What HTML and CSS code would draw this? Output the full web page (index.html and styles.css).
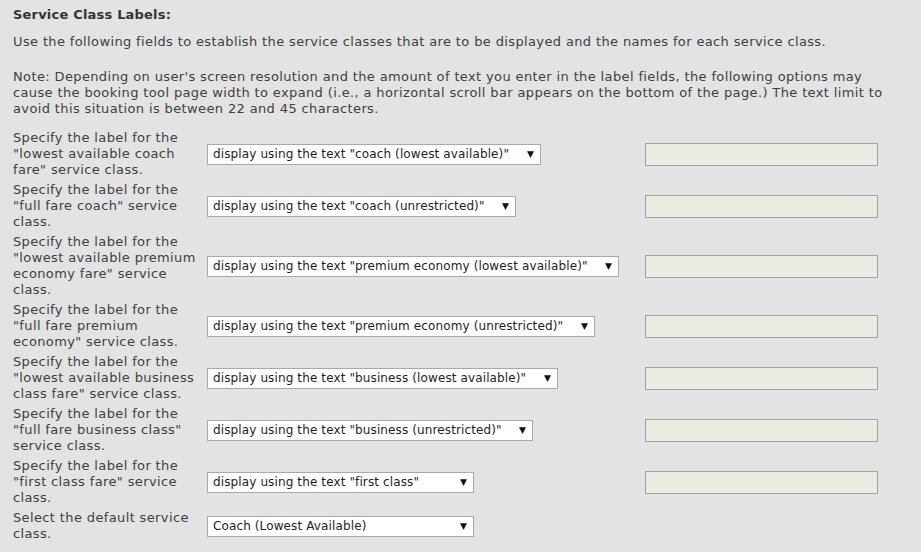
FILE: index.html
```html
<!DOCTYPE html>
<html lang="en">
<head>
<meta charset="utf-8">
<title>Service Class Labels</title>
<link rel="stylesheet" href="styles.css">
</head>
<body>
<div class="page">
  <h3 class="title">Service Class Labels:</h3>
  <p class="intro">Use the following fields to establish the service classes that are to be displayed and the names for each service class.</p>
  <p class="note">Note: Depending on user's screen resolution and the amount of text you enter in the label fields, the following options may cause the booking tool page width to expand (i.e., a horizontal scroll bar appears on the bottom of the page.) The text limit to avoid this situation is between 22 and 45 characters.</p>

  <div class="grid">
    <div class="label">Specify the label for the "lowest available coach fare" service class.</div>
    <div class="ctrl"><span class="sel"><select><option>display using the text "coach (lowest available)"</option></select><span class="arrow">▼</span></span></div>
    <div class="ctrl"><input class="field" type="text" disabled></div>

    <div class="label">Specify the label for the "full fare coach" service class.</div>
    <div class="ctrl"><span class="sel"><select><option>display using the text "coach (unrestricted)"</option></select><span class="arrow">▼</span></span></div>
    <div class="ctrl"><input class="field" type="text" disabled></div>

    <div class="label">Specify the label for the "lowest available premium economy fare" service class.</div>
    <div class="ctrl"><span class="sel"><select><option>display using the text "premium economy (lowest available)"</option></select><span class="arrow">▼</span></span></div>
    <div class="ctrl"><input class="field" type="text" disabled></div>

    <div class="label">Specify the label for the "full fare premium economy" service class.</div>
    <div class="ctrl"><span class="sel"><select><option>display using the text "premium economy (unrestricted)"</option></select><span class="arrow">▼</span></span></div>
    <div class="ctrl"><input class="field" type="text" disabled></div>

    <div class="label">Specify the label for the "lowest available business class fare" service class.</div>
    <div class="ctrl"><span class="sel"><select><option>display using the text "business (lowest available)"</option></select><span class="arrow">▼</span></span></div>
    <div class="ctrl"><input class="field" type="text" disabled></div>

    <div class="label">Specify the label for the "full fare business class" service class.</div>
    <div class="ctrl"><span class="sel"><select><option>display using the text "business (unrestricted)"</option></select><span class="arrow">▼</span></span></div>
    <div class="ctrl"><input class="field" type="text" disabled></div>

    <div class="label">Specify the label for the "first class fare" service class.</div>
    <div class="ctrl"><span class="sel sel-min"><select><option>display using the text "first class"</option></select><span class="arrow">▼</span></span></div>
    <div class="ctrl"><input class="field" type="text" disabled></div>

    <div class="label">Select the default service class.</div>
    <div class="ctrl"><span class="sel sel-min"><select><option>Coach (Lowest Available)</option></select><span class="arrow">▼</span></span></div>
    <div class="ctrl"></div>
  </div>
</div>
</body>
</html>
```

FILE: styles.css
```css
html, body {
  margin: 0;
  padding: 0;
  background: #e3e3e3;
}

body {
  font-family: "DejaVu Sans", Verdana, sans-serif;
  font-size: 13px;
  line-height: 16px;
  letter-spacing: 0.37px;
  color: #3f3f3f;
}

.page {
  padding: 7px 13px 10px 13px;
}

.title {
  margin: 0;
  font-size: 13px;
  line-height: 16px;
  font-weight: bold;
  letter-spacing: 0.2px;
  color: #333333;
}

.intro {
  margin: 11px 0 0 0;
}

.note {
  margin: 19px 0 0 0;
  width: 884px;
}

.grid {
  margin-top: 13px;
  display: grid;
  grid-template-columns: 188px 432px 233px;
  column-gap: 6px;
  row-gap: 4px;
}

.ctrl {
  display: flex;
  align-items: center;
}

.sel {
  position: relative;
  display: inline-block;
}

.sel select {
  -webkit-appearance: none;
  appearance: none;
  font-family: "DejaVu Sans", Verdana, sans-serif;
  font-size: 12px;
  line-height: 15px;
  letter-spacing: 0.12px;
  color: #1e1e1e;
  background: #ffffff;
  border: 1px solid #a9a9a9;
  border-radius: 0;
  height: 21px;
  padding: 1px 30px 1px 5px;
  margin: 0;
  outline: none;
}

.sel-min select {
  width: 267px;
}

.arrow {
  position: absolute;
  right: 7px;
  top: 5px;
  font-size: 9px;
  line-height: 10px;
  letter-spacing: 0;
  color: #111111;
  pointer-events: none;
}

.field {
  box-sizing: border-box;
  width: 233px;
  height: 23px;
  margin: 0;
  padding: 0 4px;
  border: 1px solid #a2a2a2;
  border-radius: 0;
  background: #ebebe4;
}
```
